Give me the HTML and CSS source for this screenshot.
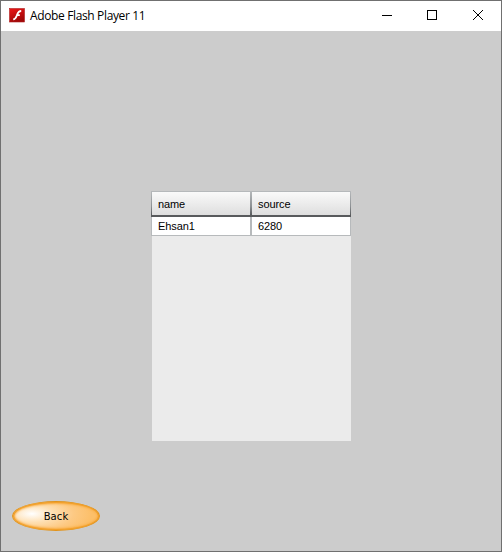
FILE: index.html
```html
<!DOCTYPE html>
<html lang="en">
<head>
<meta charset="utf-8">
<title>Adobe Flash Player 11</title>
<link rel="stylesheet" href="styles.css">
</head>
<body>
<div class="window">
  <header class="titlebar">
    <svg class="logo" width="16" height="16" viewBox="0 0 16 16">
      <defs><linearGradient id="red" x1="0" y1="0" x2="0.4" y2="1"><stop offset="0" stop-color="#ee1616"/><stop offset="1" stop-color="#a00808"/></linearGradient></defs>
      <rect x="0.5" y="0.5" width="15" height="13.5" fill="url(#red)" stroke="#b02020" stroke-width="0.6"/>
      <path d="M12.2 3C9 3 8.6 5.6 7.6 8C6.8 10.2 6.1 11.2 4.2 11.4M7.5 7.1H10.8" fill="none" stroke="#fff" stroke-width="1.8"/>
    </svg>
    <h1 class="title">Adobe Flash Player 11</h1>
    <div class="controls">
      <svg class="control" width="45" height="30" viewBox="0 0 45 30"><path d="M17 14.5H27" stroke="#000"/></svg>
      <svg class="control" width="45" height="30" viewBox="0 0 45 30"><rect x="17.5" y="9.5" width="9" height="9" fill="none" stroke="#000"/></svg>
      <svg class="control" width="45" height="30" viewBox="0 0 45 30"><path d="M18 9L28 19M28 9L18 19" stroke="#000" stroke-width="1"/></svg>
    </div>
  </header>
  <main class="stage">
    <div class="grid">
      <div class="row head"><div class="cell">name</div><div class="cell">source</div></div>
      <div class="row"><div class="cell">Ehsan1</div><div class="cell">6280</div></div>
      <div class="empty"></div>
    </div>
    <button class="back"><span class="label">Back</span></button>
  </main>
</div>
</body>
</html>
```

FILE: styles.css
```css
* { box-sizing: border-box; }
body { margin: 0; }
.window {
  display: flex;
  flex-direction: column;
  width: 502px;
  height: 552px;
  border: 1px solid #707070;
  background: #ccc;
}
.titlebar {
  display: flex;
  align-items: center;
  height: 30px;
  padding-left: 8px;
  background: #fff;
}
.logo { flex: none; margin-right: 5px; }
.title {
  margin: 0;
  font: 12px/16px "Open Sans", "Noto Sans", sans-serif;
  letter-spacing: -0.36px;
  white-space: nowrap;
  color: #000;
}
.controls { display: flex; margin-left: auto; margin-right: 1px; }
.control { display: block; }
.stage {
  flex: 1;
  display: flex;
  flex-direction: column;
  align-items: flex-start;
  padding: 160px 0 0 11px;
}
.grid {
  width: 200px;
  height: 250px;
  margin-left: 139px;
  display: flex;
  flex-direction: column;
  font: 11px/13px "Liberation Sans", Arial, sans-serif;
  letter-spacing: -0.1px;
  color: #000;
}
.row { display: flex; height: 19px; }
.cell {
  width: 100px;
  padding: 3px 6px 0;
  border: solid #b7babc;
  border-width: 0 1px 1px;
  background: #fff;
}
.head { height: 26px; }
.head .cell {
  padding-top: 6px;
  border-width: 1px 1px 2px;
  border-color: #b7babc #888c8f #5b5d5e;
  border-image: linear-gradient(#b7babc, #8c9093 60%, #585a5c 93%) 1 1 2 1;
  background: linear-gradient(#fafafa, #dedede);
}
.empty { flex: 1; margin-left: 1px; background: #ebebeb; }
.back {
  width: 88px;
  height: 30px;
  margin-top: 60px;
  padding: 2px 0 0;
  border: 1px solid #e2941c;
  border-radius: 50%;
  background: radial-gradient(ellipse 60px 24px at 22% 42%, #fff 0%, #fedfb2 36%, #fdc983 70%, #fcbf69 100%);
  box-shadow: inset 0 0 0 1px #f3a02b, inset 0 0 2px 2px #f9b04a;
  font: 10px/12px "DejaVu Sans", Verdana, sans-serif;
  color: #000;
}
.label { letter-spacing: 0.1px; }
```
